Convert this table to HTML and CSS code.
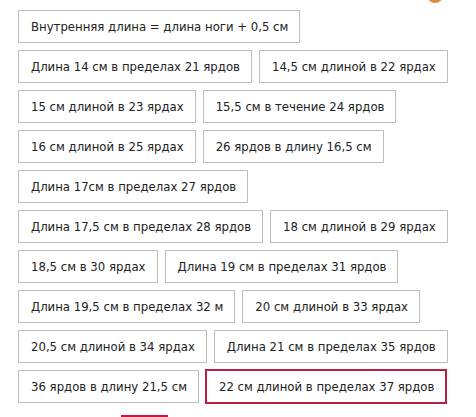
FILE: index.html
```html
<!DOCTYPE html>
<html lang="ru">
<head>
<meta charset="utf-8">
<title>Размеры</title>
<link rel="stylesheet" href="styles.css">
</head>
<body>
<span class="badge"></span>
<div class="options">
  <div class="row"><span class="opt">Внутренняя длина = длина ноги + 0,5 см</span></div>
  <div class="row"><span class="opt">Длина 14 см в пределах 21 ярдов</span><span class="opt">14,5 см длиной в 22 ярдах</span></div>
  <div class="row"><span class="opt">15 см длиной в 23 ярдах</span><span class="opt">15,5 см в течение 24 ярдов</span></div>
  <div class="row"><span class="opt">16 см длиной в 25 ярдах</span><span class="opt">26 ярдов в длину 16,5 см</span></div>
  <div class="row"><span class="opt">Длина 17см в пределах 27 ярдов</span></div>
  <div class="row"><span class="opt">Длина 17,5 см в пределах 28 ярдов</span><span class="opt">18 см длиной в 29 ярдах</span></div>
  <div class="row"><span class="opt">18,5 см в 30 ярдах</span><span class="opt">Длина 19 см в пределах 31 ярдов</span></div>
  <div class="row"><span class="opt">Длина 19,5 см в пределах 32 м</span><span class="opt">20 см длиной в 33 ярдах</span></div>
  <div class="row"><span class="opt">20,5 см длиной в 34 ярдах</span><span class="opt">Длина 21 см в пределах 35 ярдов</span></div>
  <div class="row"><span class="opt">36 ярдов в длину 21,5 см</span><span class="opt selected">22 см длиной в пределах 37 ярдов</span></div>
</div>
<div class="tab-line"></div>
</body>
</html>
```
FILE: styles.css
```css
html, body {
  margin: 0;
  padding: 0;
  background: #fff;
}
body {
  font-family: "DejaVu Sans Condensed", "DejaVu Sans", sans-serif;
  font-size: 13px;
  color: #222;
  overflow: hidden;
  height: 417px;
  position: relative;
}
.badge {
  position: absolute;
  top: -12px;
  left: 427px;
  width: 16px;
  height: 15px;
  border-radius: 50%;
  background: #dc8b3f;
}
.options {
  padding: 10px 0 0 18px;
  display: flex;
  flex-direction: column;
  gap: 7px;
}
.row {
  display: flex;
  gap: 7px;
}
.opt {
  box-sizing: border-box;
  height: 33px;
  display: flex;
  align-items: center;
  padding: 0 11px 0 12px;
  border: 1px solid #bdbdbd;
  white-space: nowrap;
}
.opt.selected {
  border: 2px solid #b81d46;
  height: 35px;
  margin: -1px 0 -1px -1px;
}
.tab-line {
  margin: 12px 0 0 121px;
  width: 47px;
  height: 2px;
  background: #c8163f;
}
```
